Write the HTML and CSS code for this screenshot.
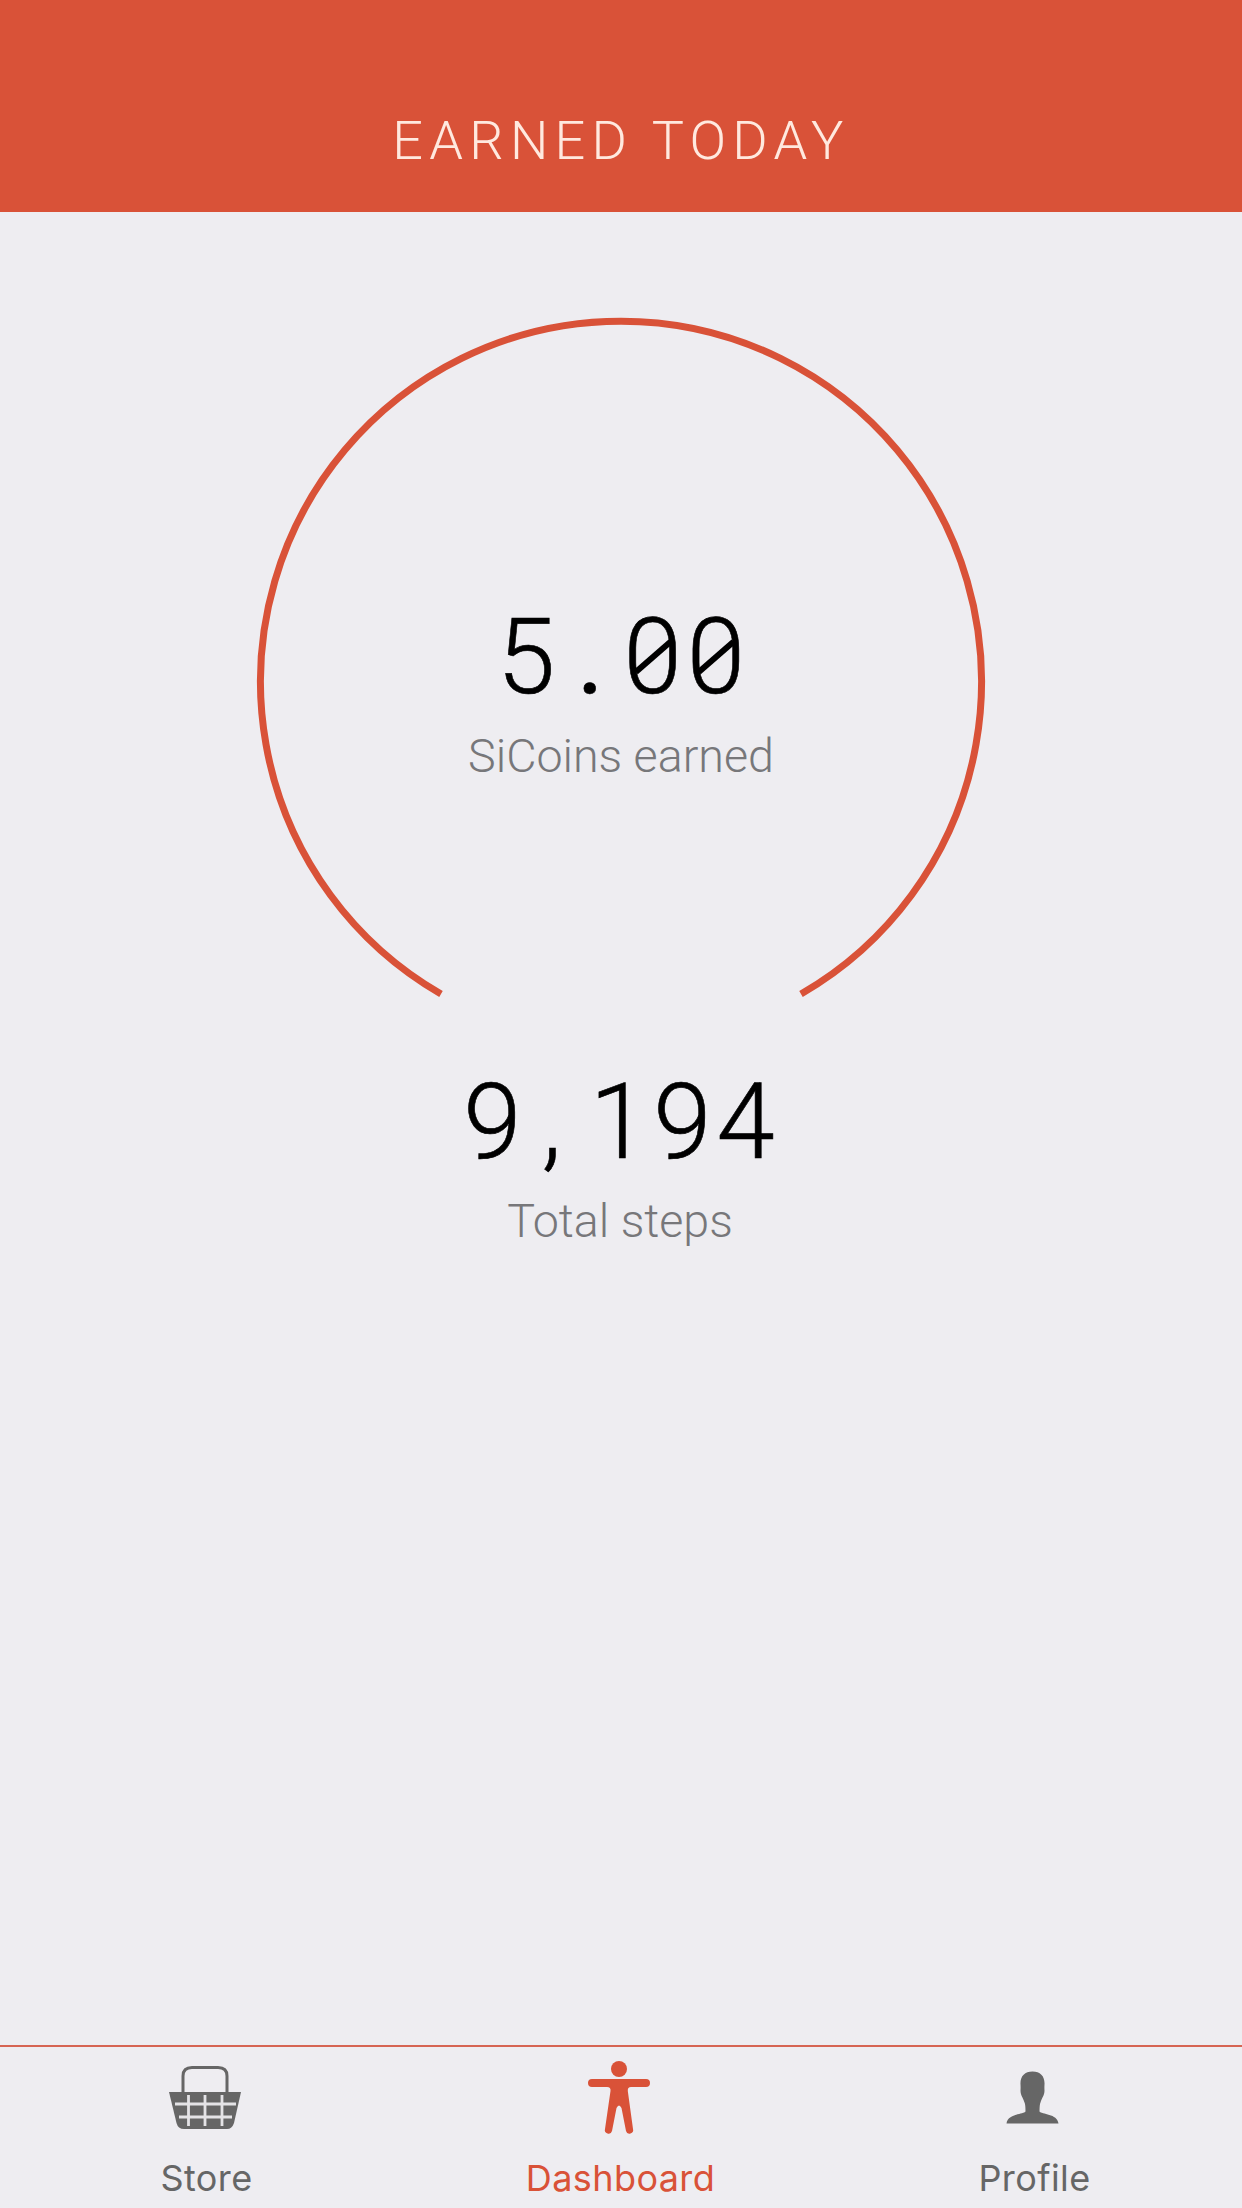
FILE: index.html
```html
<!DOCTYPE html>
<html lang="en">

<head>
  <title>Earned today</title>

  <meta charset="utf-8">
  <meta name="viewport" content="width=device-width, initial-scale=1">
  <link rel="stylesheet" href="styles.css">
</head>

<body>
  <header class="header">
    <h1>EARNED TODAY</h1>
  </header>

  <main class="content">
    <section class="gauge">
      <svg class="gauge-arc" viewBox="0 0 730 690">
        <path d="M185 677 A360.5 360.5 0 1 1 545 677" />
      </svg>
      <div class="gauge-text">
        <p class="number coins"><span>5</span><span class="point">.</span><span class="zero">0</span><span class="zero">0</span></p>
        <p class="label">SiCoins earned</p>
      </div>
    </section>

    <section class="steps">
      <p class="number"><span>9</span><span class="comma">,</span><span>1</span><span>9</span><span>4</span></p>
      <p class="label">Total steps</p>
    </section>
  </main>

  <nav class="tabs">
    <a class="tab">
      <svg class="icon" viewBox="0 0 80 80">
        <path class="handle" d="M16 33 V16 Q16 7.5 25 7.5 H51 Q60 7.5 60 16 V33" />
        <path d="M2 32 H74 L67 63 Q65 69 60 69 H17 Q11 69 9.500 63 Z" />
        <path class="grid" d="M8 44 H69 M12 57 H65 M21.500 35 V66 M38 35 V66 M55 35 V66" />
      </svg>
      <span>Store</span>
    </a>
    <a class="tab active">
      <svg class="icon" viewBox="0 0 80 80">
        <circle cx="38" cy="9" r="8" />
        <path d="M11 19 H65 A4 4 0 0 1 65 27 H50 Q46.500 27 46.800 31 L52 69 A3.600 3.600 0 0 1 45 71 L40.500 48 Q38 43 35.500 48 L31 71 A3.600 3.600 0 0 1 24 69 L29.500 31 Q30 27 26 27 H11 A4 4 0 0 1 11 19 Z" />
      </svg>
      <span>Dashboard</span>
    </a>
    <a class="tab">
      <svg class="icon" viewBox="1.500 -0.500 80 80">
        <path d="M39 11 C47 11 51.500 16 51 24 Q50.800 27 51 30 C51 35 48.500 37 47 42 Q46 44 46 51 C48 54 64 53 65 63 H13 C14 53 30 54 32 51 Q32 44 31 42 C29.500 37 27 35 27 30 Q27.200 27 27 24 C26.500 16 31 11 39 11 Z" />
      </svg>
      <span>Profile</span>
    </a>
  </nav>
</body>

</html>
```
FILE: styles.css
```css
body {
  margin: 0;
  height: 2208px;
  display: flex;
  flex-direction: column;
  background-color: #eeedf1;
  color: #000;
  font-family: Roboto, sans-serif;
  font-weight: 300;
  overflow: hidden;
}

h1,
p {
  margin: 0;
  font-weight: 300;
}

.header {
  height: 212px;
  box-sizing: border-box;
  padding-top: 110px;
  background-color: #d95238;
  text-align: center;
}

h1 {
  color: #ffe9df;
  font-size: 54px;
  line-height: 62px;
  letter-spacing: 6.3px;
}

.content {
  flex: 1;
  display: flex;
  flex-direction: column;
  align-items: center;
}

.gauge {
  display: grid;
  width: 730px;
  height: 690px;
  margin-top: 105px;
}

.gauge-arc,
.gauge-text {
  grid-area: 1 / 1;
}

.gauge-arc path {
  fill: none;
  stroke: #d95238;
  stroke-width: 7;
}

.gauge-text {
  padding-top: 281px;
}

.number {
  display: flex;
  justify-content: center;
  font-size: 105px;
  line-height: 120px;
  -webkit-text-stroke: 0.6px #000;
}

.number span {
  width: 63.3px;
  text-align: center;
}

.number .point {
  font-weight: 400;
  text-indent: 2px;
}

.number .comma {
  text-indent: -8px;
}

/* slashed zero */
.zero {
  position: relative;
}

.zero::after {
  content: "";
  position: absolute;
  left: 9px;
  top: 56px;
  width: 46px;
  height: 5.5px;
  background-color: #000;
  transform: rotate(-41deg);
}

.label {
  color: #77777a;
  font-size: 46.6px;
  line-height: 56px;
  margin-top: 10px;
  text-align: center;
}

.steps {
  margin-top: 56px;
}

.steps .number {
  padding-right: 4px;
}

.steps .label {
  padding-right: 2px;
}

.tabs {
  display: flex;
  height: 163px;
  box-sizing: border-box;
  border-top: 2px solid #d66553;
}

.tab {
  flex: 1;
  display: flex;
  flex-direction: column;
  align-items: center;
  padding-top: 13px;
  color: #666;
  font-family: Inter, sans-serif;
  font-size: 36px;
  font-weight: 400;
  line-height: 44px;
  letter-spacing: 0.4px;
}

.tab span {
  margin-top: 16px;
  padding-right: 1px;
}

.icon {
  width: 80px;
  height: 80px;
  fill: currentColor;
}

.handle {
  fill: none;
  stroke: currentColor;
  stroke-width: 3;
}

.grid {
  stroke: #e4e3e6;
  stroke-width: 2.8;
}

.active {
  color: #d95238;
}
```
